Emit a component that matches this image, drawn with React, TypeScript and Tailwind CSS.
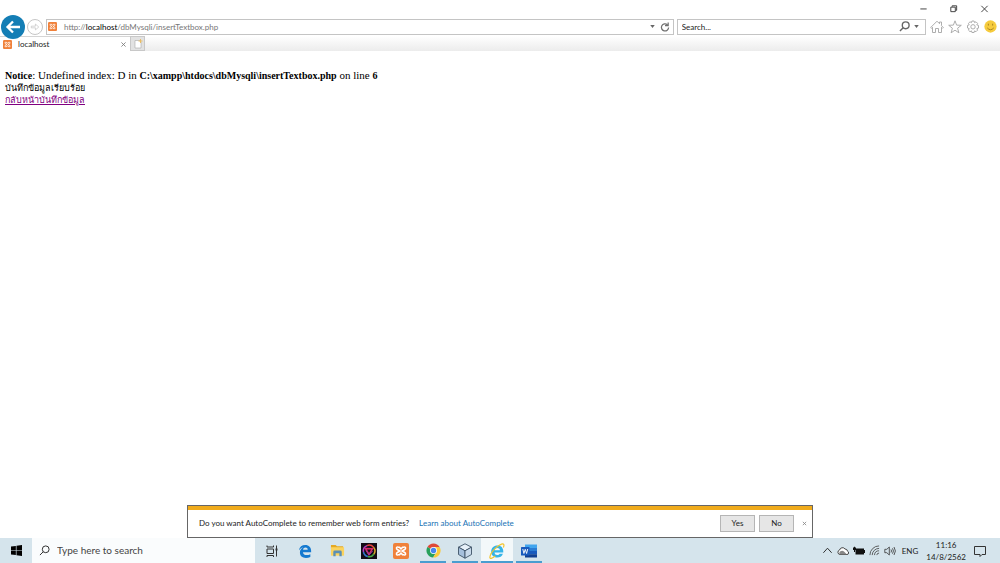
import type { ReactNode } from "react";

interface TaskItem {
    name: string;
    icon: ReactNode;
    open?: boolean;
    active?: boolean;
}

function XamppIcon(props: { className: string }) {
    return (
        <svg viewBox="0 0 16 16" className={props.className}>
            <rect width="16" height="16" rx="2" fill="#f0813a" />
            <path d="M5 4.2C3.5 3.4 2.6 5.7 4.6 6.7L7 8 4.6 9.3C2.6 10.3 3.5 12.6 5 11.8M11 4.2c1.5-.8 2.4 1.5.4 2.5L9 8l2.4 1.3c2 1 1.1 3.3-.4 2.5M5 4.2h1.5L8 6l1.5-1.8H11M5 11.8h1.5L8 10l1.5 1.8H11" fill="none" stroke="#fff" strokeWidth="1.6" strokeLinejoin="round" />
        </svg>
    );
}

function SearchGlyph(props: { className: string; width: number }) {
    return (
        <svg viewBox="0 0 12 12" className={props.className} fill="none" stroke="currentColor" strokeWidth={props.width}>
            <circle cx="7.3" cy="4.7" r="3.7" />
            <path d="M4.6 7.4 1 11" />
        </svg>
    );
}

function DownArrow() {
    return (
        <svg viewBox="0 0 6 4" className="h-[3px] w-[5px]">
            <path d="M0 0h6L3 4z" fill="#666" />
        </svg>
    );
}

const taskItems: TaskItem[] = [
    {
        name: "Microsoft Edge",
        icon: (
            <svg viewBox="0 0 16 16" className="size-[14px]">
                <path d="M1 7.3C1.8 3 4.5 1 8.3 1c4.2 0 6.7 2.900 6.700 6.700v1.800H5.600c.2 2.300 2.100 3.200 4.300 3.200 1.600 0 2.900-.4 4.200-1.100v3.200c-1.500.8-3.100 1.100-5 1.100-4.300 0-6.900-2.400-6.900-6.200 0-2.700 1.400-4.800 3.900-6C3.800 4.500 2.200 5.600 1 7.300zM5.800 6.500h5.300c0-1.700-1-2.600-2.500-2.600-1.600 0-2.600 1-2.800 2.600z" fill="#1479d0" />
            </svg>
        ),
    },
    {
        name: "File Explorer",
        icon: (
            <svg viewBox="0 0 16 16" className="size-[15px]">
                <path d="M1 2h5l1.500 1.500H14v3H1z" fill="#e5a923" />
                <path d="M1 4.500h14v9H1z" fill="#fbd35e" />
                <path d="M3.500 14V9.500Q3.500 8 5 8h6q1.500 0 1.500 1.500V14h-2.500v-3H6v3z" fill="#5b8fb5" />
            </svg>
        ),
    },
    {
        name: "Media",
        icon: (
            <svg viewBox="0 0 16 16" className="size-4">
                <rect width="16" height="16" fill="#130c16" />
                <g fill="none" strokeWidth="1.500">
                    <path d="M2.500 9A5.700 5.700 0 0 1 6 2.600" stroke="#b53bc2" />
                    <path d="M6 2.600a5.700 5.700 0 0 1 6.500 1.600" stroke="#e8453b" />
                    <path d="M12.500 4.200a5.700 5.700 0 0 1 .3 7" stroke="#d8a52a" />
                    <path d="M12.800 11.200a5.700 5.700 0 0 1-6 2.300" stroke="#49ad42" />
                    <path d="M6.800 13.500A5.700 5.700 0 0 1 2.500 9" stroke="#3279cf" />
                    <path d="m4.500 5.500 7 .2L8 11.500z" stroke="#d82a68" />
                    <path d="M5 7.500 8 12l3.500-4" stroke="#983da4" strokeWidth="1" />
                </g>
            </svg>
        ),
    },
    { name: "XAMPP", icon: <XamppIcon className="size-4" /> },
    {
        name: "Google Chrome",
        open: true,
        icon: (
            <svg viewBox="0 0 16 16" className="size-[15px]">
                <path d="M8 8 1.500 4.200A7.500 7.500 0 0 1 14.500 4.200z" fill="#df4937" />
                <path d="M8 8 1.500 4.200A7.500 7.500 0 0 0 7.600 15.500L11 9.500z" fill="#27a05b" />
                <path d="M8 4.200h6.500A7.500 7.500 0 0 1 7.600 15.500L11.300 9.500z" fill="#fbcb3c" />
                <circle cx="8" cy="8" r="3.700" fill="#fff" />
                <circle cx="8" cy="8" r="2.900" fill="#4787ed" />
            </svg>
        ),
    },
    {
        name: "NetBeans",
        open: true,
        icon: (
            <svg viewBox="0 0 16 16" className="size-4" stroke="#3e5266" strokeWidth=".9" strokeLinejoin="round">
                <path d="m8 .8 6.500 3.400L8 7.800 1.500 4.200z" fill="#e6f0f8" />
                <path d="M1.500 4.200 8 7.800v7.400l-6.500-3.700z" fill="#a6c0dc" />
                <path d="M14.500 4.200 8 7.800v7.400l6.500-3.700z" fill="#c8d9ea" />
            </svg>
        ),
    },
    {
        name: "Internet Explorer",
        open: true,
        active: true,
        icon: (
            <svg viewBox="0 0 16 16" className="size-4">
                <path d="M14.300 9.500H5.500c.2 1.700 1.200 2.500 2.800 2.500 1.100 0 1.900-.4 2.400-1.200h3.200C13 13.400 11 14.600 8.200 14.600c-3.700 0-6-2.400-6-6 0-3.700 2.500-6.200 6.200-6.200 3.900 0 6.200 2.600 5.900 7.100zM5.600 7.200h5.300C10.800 5.700 9.800 5 8.300 5 6.800 5 5.900 5.800 5.600 7.200z" fill="#35b4e8" />
                <path d="M2.200 10.500C.2 14 .6 15.700 2.300 15.300c1.200-.3 2.700-1.200 4-2.300M1.600 11.500C3.500 7.500 8.500 2.500 12.500 1.100c2.400-.8 3 .8 1.900 3.400" fill="none" stroke="#f2c52d" strokeWidth="1.200" />
            </svg>
        ),
    },
    {
        name: "Word",
        open: true,
        icon: (
            <svg viewBox="0 0 16 16" className="size-4">
                <path d="M4 1.500h12V5H4z" fill="#41a5ee" />
                <path d="M4 5h12v3H4z" fill="#2b7cd3" />
                <path d="M4 8h12v3.200H4z" fill="#185abd" />
                <path d="M4 11.200h12v3.300H4z" fill="#103f91" />
                <rect y="4" width="8.500" height="8.500" rx=".6" fill="#185abd" />
                <path d="m1.800 6 1.100 4.500L4.250 6.300l1.350 4.200L6.700 6" fill="none" stroke="#fff" strokeWidth=".9" />
            </svg>
        ),
    },
];

function TitleBar() {
    return (
        <div className="flex h-[17px] items-center justify-end gap-5 pr-[10px] text-[#333]">
            <button aria-label="Minimize" className="flex size-[10px] items-center justify-center">
                <svg viewBox="0 0 10 10" className="size-[9px]" fill="none" stroke="currentColor"><path d="M1.500 5.500h7" /></svg>
            </button>
            <button aria-label="Restore" className="flex size-[10px] items-center justify-center">
                <svg viewBox="0 0 10 10" className="size-[9px]" fill="none" stroke="currentColor"><path d="M2 3.500h5v5H2zM3.500 3V2h5v5h-1" /></svg>
            </button>
            <button aria-label="Close" className="flex size-[12px] items-center justify-center">
                <svg viewBox="0 0 10 10" className="size-[9px]" fill="none" stroke="currentColor"><path d="m1.500 2 7 7m0-7-7 7" /></svg>
            </button>
        </div>
    );
}

function AddressBar() {
    return (
        <div className="flex h-[19px] items-center pr-[3px]">
            <button aria-label="Back" className="relative z-10 ml-px flex size-6 shrink-0 items-center justify-center rounded-full bg-[#147eb5]">
                <svg viewBox="0 0 16 16" className="size-4" fill="none" stroke="#fff" strokeWidth="2.300"><path d="M15 8H2.500M8 2.500 2.500 8 8 13.500" /></svg>
            </button>
            <button aria-label="Forward" className="ml-[2px] flex size-4 shrink-0 items-center justify-center rounded-full border border-[#c6c6c6]">
                <svg viewBox="0 0 12 12" className="size-[10px]" fill="none" stroke="#c0c0c0" strokeWidth=".8"><path d="M1.500 5h5V2.500L10.500 6 6.500 9.500V7h-5z" /></svg>
            </button>
            <div className="ml-[3px] flex h-4 min-w-0 flex-1 items-center border border-[#c4c4c4] pr-[3px] pl-[1px]">
                <XamppIcon className="size-[9px] shrink-0" />
                <div role="textbox" tabIndex={0} aria-label="Address" className="ml-[7px] min-w-0 flex-1 whitespace-nowrap text-[8px] text-[#777]">
                    http://<span className="text-black">localhost</span>/dbMysqli/insertTextbox.php
                </div>
                <button aria-label="Show address list" className="mr-[5px]"><DownArrow /></button>
                <button aria-label="Refresh">
                    <svg viewBox="0 0 12 12" className="size-[10px]" fill="none" stroke="#707070" strokeWidth="1.500"><path d="M10.300 6.500A4.300 4.300 0 1 1 8.800 3.200M9.800.5v3.700H6" /></svg>
                </button>
            </div>
            <div className="ml-[3px] flex h-4 w-1/4 shrink-0 items-center border border-[#c4c4c4] pr-[6px] pl-1">
                <input aria-label="Search" placeholder="Search..." className="min-w-0 flex-1 text-[8px] outline-none placeholder:text-[#222]" />
                <button aria-label="Search the web" className="mr-1 text-[#666]"><SearchGlyph className="size-[11px]" width={1.500} /></button>
                <button aria-label="Search options"><DownArrow /></button>
            </div>
            <div className="ml-1 flex shrink-0 items-center gap-1 text-[#a5a5a5]">
                <button aria-label="Home">
                    <svg viewBox="0 0 14 14" className="size-[14px]" fill="none" stroke="currentColor" strokeWidth=".9"><path d="M.7 7.500 7 1.200l2.500 2.500V2h2v3.700l1.800 1.800-.8.8-1-1v5.200H8.500V8.500h-3v4h-3V7.300l-1 1z" /></svg>
                </button>
                <button aria-label="Favorites">
                    <svg viewBox="0 0 14 14" className="size-[14px]" fill="none" stroke="currentColor" strokeWidth=".9"><path d="m7 .8 1.600 4.300 4.700.2-3.700 2.900 1.300 4.600L7 10.200l-3.900 2.600 1.300-4.600L.7 5.300l4.700-.2z" /></svg>
                </button>
                <button aria-label="Tools">
                    <svg viewBox="0 0 14 14" className="size-[14px]" fill="none" stroke="currentColor" strokeWidth=".9">
                        <path d="M5.900 1h2.200l.4 1.600 1.500-.8 1.600 1.600-.8 1.500 1.700.5v2.700l-1.700.5.8 1.500-1.600 1.600-1.500-.8-.4 1.600H5.900l-.4-1.600-1.500.8-1.600-1.600.8-1.500L1.500 8V5.400l1.700-.5-.8-1.500L4 1.800l1.500.8z" />
                        <circle cx="7" cy="6.800" r="2.200" />
                    </svg>
                </button>
                <button aria-label="Feedback">
                    <svg viewBox="0 0 14 14" className="size-[13px]">
                        <circle cx="7" cy="7" r="6.600" fill="#f6cb3d" />
                        <path d="M3.500 8.500q3.500 4 7 0M4.700 4v2M9.300 4v2" fill="none" stroke="#a5801c" strokeWidth="1" />
                    </svg>
                </button>
            </div>
        </div>
    );
}

function TabRow() {
    return (
        <div className="flex h-[15px] bg-linear-to-b from-white to-[#ececec] text-[8px]">
            <div className="flex w-[130px] items-center border-t border-[#d5d5d5] bg-white pr-1 pl-[3px]">
                <XamppIcon className="size-[9px]" />
                <span className="ml-[6px] flex-1 text-[#222]">localhost</span>
                <button aria-label="Close tab">
                    <svg viewBox="0 0 6 6" className="size-[5px]" stroke="#777"><path d="m.5.5 5 5m0-5-5 5" /></svg>
                </button>
            </div>
            <button aria-label="New tab" className="flex w-[15px] items-center justify-center border border-[#c8c8c8] bg-[#e2e2e2]">
                <svg viewBox="0 0 10 10" className="size-[10px]">
                    <path d="M2 1.500h4.500L8 3v6H2z" fill="#fff" stroke="#aaa" strokeWidth=".6" />
                    <path d="M7.500 0v4M5.500 2h4" stroke="#e9bd65" strokeWidth="1" />
                </svg>
            </button>
        </div>
    );
}

function AutoCompleteBar() {
    return (
        <div className="mx-auto flex h-[33px] w-full max-w-[626px] flex-col border border-[#666] bg-white text-[8px]">
            <div className="h-1 bg-[#f0ab1c]" />
            <div className="flex flex-1 items-center pr-[5px] pb-px pl-[11px] text-[#222]">
                <span>Do you want AutoComplete to remember web form entries?</span>
                <a href="#learn" className="ml-[10px] flex-1 text-[#1a73b5]">Learn about AutoComplete</a>
                <button className="h-[17px] w-[35px] border border-[#b5b5b5] bg-[#e6e6e6]">Yes</button>
                <button className="ml-1 h-[17px] w-[35px] border border-[#b5b5b5] bg-[#e6e6e6]">No</button>
                <button aria-label="Dismiss" className="ml-2">
                    <svg viewBox="0 0 6 6" className="size-[5px]" stroke="#888"><path d="m1 1 4 4m0-4-4 4" /></svg>
                </button>
            </div>
        </div>
    );
}

function Taskbar() {
    return (
        <div className="flex h-[25px] bg-[#d5e4ec] text-[8px] text-[#222]">
            <button aria-label="Start" className="flex w-8 items-center justify-center">
                <svg viewBox="0 0 12 12" className="size-[11px]"><path d="M0 1.700 5.300 1v4.700H0zM6 .9 12 0v5.700H6zM0 6.300h5.300V11L0 10.300zM6 6.300h6V12l-6-.9z" fill="#000" /></svg>
            </button>
            <div className="flex w-[223px] items-center bg-[#fafcfd] pl-[7px]">
                <SearchGlyph className="size-[11px] shrink-0" width={1} />
                <input aria-label="Type here to search" placeholder="Type here to search" className="ml-[7px] min-w-0 flex-1 text-[10px] outline-none placeholder:text-[#444]" />
            </div>
            <button aria-label="Task View" className="flex w-[34px] items-center justify-center">
                <svg viewBox="0 0 14 12" className="h-[12px] w-[14px]" fill="none" stroke="#333" strokeWidth="1"><path d="M2 .5V2h6.500V.5M2 4h6.500v4.500H2zM2 12v-1.500h6.500V12M11.500.5v11" /><path d="M10.500 3.500h2v2h-2z" fill="#333" stroke="none" /></svg>
            </button>
            {taskItems.map((item) => (
                <button key={item.name} aria-label={item.name} className={`flex w-8 flex-col items-center ${item.active ? "bg-[#f3f8fa]" : ""}`}>
                    <span className="flex flex-1 items-center pt-[2px]">{item.icon}</span>
                    <span className={`h-[2px] ${item.active ? "w-full" : "w-[26px]"} ${item.open ? "bg-[#4a9dd0]" : ""}`} />
                </button>
            ))}
            <div className="ml-auto flex items-center gap-1 pr-[14px]">
                <svg viewBox="0 0 12 12" className="size-[11px]" fill="none" stroke="#222"><path d="m1.500 8.500 4.500-5 4.500 5" /></svg>
                <svg viewBox="0 0 12 12" className="size-[12px]">
                    <path d="M3 9.500a2.300 2.300 0 0 1-.4-4.500A3 3 0 0 1 8 4a2.500 2.500 0 0 1 2.500 2.200 1.700 1.700 0 0 1-.5 3.300z" fill="#fff" stroke="#333" strokeWidth=".9" />
                    <path d="M3 9.500a2 2 0 0 1 .5-3.300q2-.9 3.500.3l3 3z" fill="#888" />
                </svg>
                <svg viewBox="0 0 12 12" className="size-[12px]"><path d="M2.500 3.500H11V5h1v3h-1v1.500H2.500zM0 2.500h1V1.800h1v.7h1V5H2v2H1V5H0z" fill="#111" /></svg>
                <svg viewBox="0 0 12 12" className="size-[11px]" fill="none" stroke="#444" strokeWidth=".9"><path d="M1 11A10 10 0 0 1 11 1M3.500 11A7.500 7.500 0 0 1 11 3.700M6 11a5 5 0 0 1 5-4.700M8.500 11A2.500 2.500 0 0 1 11 8.800" /></svg>
                <svg viewBox="0 0 12 12" className="size-[12px]" fill="none" stroke="#333" strokeWidth=".8"><path d="M.8 4.300h2L5.300 2v8L2.800 7.700h-2zM7 4.500q1 1.500 0 3M8.500 3.300q1.900 2.700 0 5.400M10 2q2.800 4 0 8" /></svg>
                <span className="ml-[2px]">ENG</span>
                <div className="ml-1 text-center leading-[12px]">
                    <div>11:16</div>
                    <div>14/8/2562</div>
                </div>
                <button aria-label="Notifications" className="ml-1">
                    <svg viewBox="0 0 12 12" className="size-[12px]" fill="none" stroke="#333"><path d="M.5 1.500h11v8H8L6 11.500v-2H.5z" /></svg>
                </button>
            </div>
        </div>
    );
}

export default function App() {
    return (
        <div className="flex min-h-screen flex-col bg-white font-['Lato','Open_Sans',sans-serif]">
            <header>
                <TitleBar />
                <AddressBar />
                <TabRow />
            </header>
            <main className="flex-1 px-[5px] pt-[18px] font-['Liberation_Serif',serif] text-[11px] leading-[13px] text-black">
                <p className="[&_b]:text-[10px]">
                    <b>Notice</b>: Undefined index: D in <b>C:\xampp\htdocs\dbMysqli\insertTextbox.php</b> on line <b>6</b>
                </p>
                <div className="text-[9px] leading-[12px]">
                    <p>บันทึกข้อมูลเรียบร้อย</p>
                    <a href="#back" className="text-[#800080] underline">กลับหน้าบันทึกข้อมูล</a>
                </div>
            </main>
            <AutoCompleteBar />
            <Taskbar />
        </div>
    );
}
